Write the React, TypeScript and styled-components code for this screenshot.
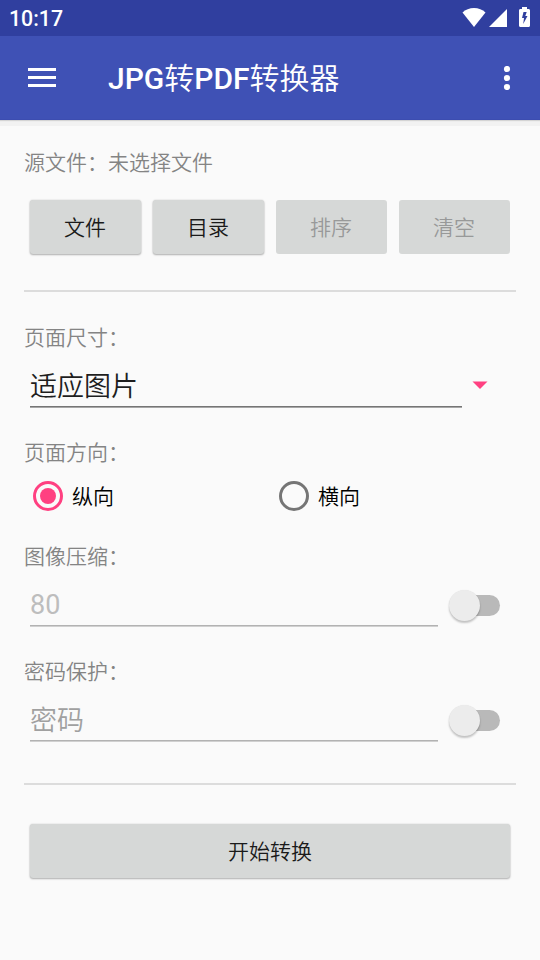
import React from "react";
import styled, { createGlobalStyle } from "styled-components";

const GlobalStyle = createGlobalStyle`
  *, *::before, *::after { box-sizing: border-box; }
  body {
    margin: 0;
    background: #fafafa;
    font-family: Roboto, "Noto Sans CJK SC", sans-serif;
  }
  button, input { font-family: inherit; }
`;

const Screen = styled.div`
  width: 540px;
  height: 960px;
  display: flex;
  flex-direction: column;
  background: #fafafa;
  overflow: hidden;
`;

const StatusBar = styled.header`
  height: 36px;
  flex: none;
  display: flex;
  align-items: center;
  justify-content: space-between;
  padding: 0 9px;
  background: #303f9f;
  color: #fff;
`;

const Clock = styled.span`
  font-size: 21.3px;
  line-height: 36px;
  padding-top: 2px;
  font-weight: 500;
`;

const StatusIcons = styled.svg`
  width: 70px;
  height: 24px;
  display: block;
  margin-top: -2px;
`;

const Toolbar = styled.div`
  height: 84px;
  flex: none;
  display: flex;
  align-items: center;
  padding: 0 24px 0 28px;
  background: #3f51b5;
  color: #fff;
  border-bottom: 1px solid #3c4db0;
  box-shadow: 0 1px 1px rgba(0, 0, 0, 0.12), 0 6px 0 #f2f2f2;
`;

const IconButton = styled.button`
  display: block;
  border: 0;
  padding: 0;
  background: none;
  color: inherit;
  svg { display: block; }
`;

const Title = styled.h1`
  flex: 1;
  margin: 0 0 0 52px;
  font-size: 30px;
  line-height: 42px;
  font-weight: 500;
`;

const Cjk = styled.span`
  font-family: "Noto Sans CJK SC", sans-serif;
  font-weight: 350;
`;

const Content = styled.main`
  display: flex;
  flex-direction: column;
  padding: 28px 24px 0;
`;

const Label = styled.div`
  height: 28px;
  line-height: 30px;
  font-size: 21px;
  font-weight: 350;
  color: #848484;
`;

const ButtonRow = styled.div`
  display: grid;
  grid-template-columns: repeat(4, 111px);
  column-gap: 12px;
  padding: 0 6px;
  margin: 24px 0 36px;
`;

const RaisedButton = styled.button`
  height: 54px;
  border: 0;
  border-radius: 3px;
  padding: 2px 1px 0 0;
  background: #d6d8d7;
  font-size: 21px;
  line-height: 52px;
  font-weight: 350;
  color: #1a1a1a;
  box-shadow: 0 0 2px rgba(0, 0, 0, 0.14), 0 1px 2px rgba(0, 0, 0, 0.28);
  &:disabled {
    color: #989999;
    box-shadow: none;
  }
`;

const StartButton = styled(RaisedButton)`
  margin: 39px 6px 0;
  padding-right: 0;
`;

const Divider = styled.hr`
  width: 100%;
  height: 2px;
  border: 0;
  margin: 0;
  background: #dcdcdc;
`;

const Spinner = styled.div`
  height: 58px;
  display: flex;
  align-items: flex-start;
  margin: 0 6px;
`;

const SpinnerValue = styled.div`
  width: 432px;
  height: 57px;
  line-height: 72px;
  font-size: 27px;
  font-weight: 350;
  color: #1e1e1e;
  background: linear-gradient(#757575 50%, #a6a6a6 50%) left bottom / 100% 2px no-repeat;
`;

const Arrow = styled.svg`
  display: block;
  width: 16px;
  height: 8px;
  margin: 30px 0 0 10px;
`;

const RadioGroup = styled.div`
  display: grid;
  grid-template-columns: 246px 246px;
  height: 48px;
  margin-top: 6px;
`;

const Radio = styled.label`
  display: flex;
  align-items: center;
  padding-left: 9px;
  gap: 9px;
  font-size: 21px;
  font-weight: 350;
  color: #000;
`;

const RadioText = styled.span`
  line-height: 28px;
  padding-top: 2px;
`;

const Ring = styled.span<{ $on?: boolean }>`
  width: 30px;
  height: 30px;
  border-radius: 50%;
  border: 3px solid ${(p) => (p.$on ? "#ff4081" : "#757575")};
  display: grid;
  place-items: center;
  &::after {
    content: "";
    width: 16px;
    height: 16px;
    border-radius: 50%;
    background: ${(p) => (p.$on ? "#ff4081" : "transparent")};
  }
`;

const FieldRow = styled.div`
  display: flex;
  align-items: flex-start;
  height: 58px;
  padding-left: 6px;
`;

const Field = styled.input<{ $tone: string; $weight: number; $top: number }>`
  width: 408px;
  height: 57px;
  border: 0;
  padding: ${(p) => p.$top}px 0 0;
  background: linear-gradient(#b2b2b2 50%, #d0d0d0 50%) left bottom / 100% 2px no-repeat;
  outline: 0;
  border-radius: 0;
  font-size: 27px;
  font-weight: ${(p) => p.$weight};
  color: ${(p) => p.$tone};
  &::placeholder { color: ${(p) => p.$tone}; opacity: 1; }
`;

const Switch = styled.span`
  width: 50px;
  height: 21px;
  margin: 25px 0 0 12px;
  border-radius: 11px;
  background: #b9b9b9;
  display: flex;
  align-items: center;
`;

const Thumb = styled.span`
  width: 31px;
  height: 31px;
  flex: none;
  margin-left: -1px;
  border-radius: 50%;
  background: #ececec;
  box-shadow: 0 2px 2px rgba(0, 0, 0, 0.22), 0 0 1px rgba(0, 0, 0, 0.1);
`;

const Gap = styled.div<{ $h: number }>`
  height: ${(p) => p.$h}px;
`;

export default function App() {
  return (
    <>
      <GlobalStyle />
      <Screen>
        <StatusBar>
          <Clock>10:17</Clock>
          <StatusIcons viewBox="461 5 70 24" fill="#fff">
            <path d="M474 27 462.5 12.6C465.5 9.6 469.500 8 474 8s8.500 1.600 11.500 4.600z" />
            <path d="M507 9v18h-18z" />
            <path
              fillRule="evenodd"
              d="M522 7h5v2h1.500c.9 0 1.500.6 1.500 1.500v15c0 .9-.6 1.500-1.500 1.500h-8c-.9 0-1.500-.6-1.500-1.500v-15c0-.9.6-1.500 1.500-1.500h1.500zM523.500 12l-1.500 6h2l-.8 6 4.300-8h-2.200l1.400-4z"
            />
          </StatusIcons>
        </StatusBar>
        <Toolbar>
          <IconButton aria-label="菜单">
            <svg width="28" height="19" viewBox="0 0 28 19" fill="#fff">
              <path d="M0 0h28v3H0zM0 8h28v3H0zM0 16h28v3H0z" />
            </svg>
          </IconButton>
          <Title>
            JPG<Cjk>转</Cjk>PDF<Cjk>转换器</Cjk>
          </Title>
          <IconButton aria-label="更多">
            <svg width="18" height="24" viewBox="0 0 18 24" fill="#fff">
              <circle cx="9" cy="3" r="3.100" />
              <circle cx="9" cy="12" r="3.100" />
              <circle cx="9" cy="21" r="3.100" />
            </svg>
          </IconButton>
        </Toolbar>
        <Content>
          <Label>源文件：未选择文件</Label>
          <ButtonRow>
            <RaisedButton>文件</RaisedButton>
            <RaisedButton>目录</RaisedButton>
            <RaisedButton disabled>排序</RaisedButton>
            <RaisedButton disabled>清空</RaisedButton>
          </ButtonRow>
          <Divider />
          <Gap $h={31} />
          <Label>页面尺寸：</Label>
          <Spinner>
            <SpinnerValue>适应图片</SpinnerValue>
            <Arrow viewBox="0 0 16 8" fill="#ff4081">
              <path d="M.5 .5h15L8 8z" />
            </Arrow>
          </Spinner>
          <Gap $h={29} />
          <Label>页面方向：</Label>
          <RadioGroup>
            <Radio>
              <Ring $on />
              <RadioText>纵向</RadioText>
            </Radio>
            <Radio>
              <Ring />
              <RadioText>横向</RadioText>
            </Radio>
          </RadioGroup>
          <Gap $h={22} />
          <Label>图像压缩：</Label>
          <FieldRow>
            <Field $tone="#bdbdbd" $weight={400} $top={13} defaultValue="80" />
            <Switch>
              <Thumb />
            </Switch>
          </FieldRow>
          <Gap $h={29} />
          <Label>密码保护：</Label>
          <FieldRow>
            <Field $tone="#a0a0a0" $weight={350} $top={14} placeholder="密码" />
            <Switch>
              <Thumb />
            </Switch>
          </FieldRow>
          <Gap $h={40} />
          <Divider />
          <StartButton>开始转换</StartButton>
        </Content>
      </Screen>
    </>
  );
}
